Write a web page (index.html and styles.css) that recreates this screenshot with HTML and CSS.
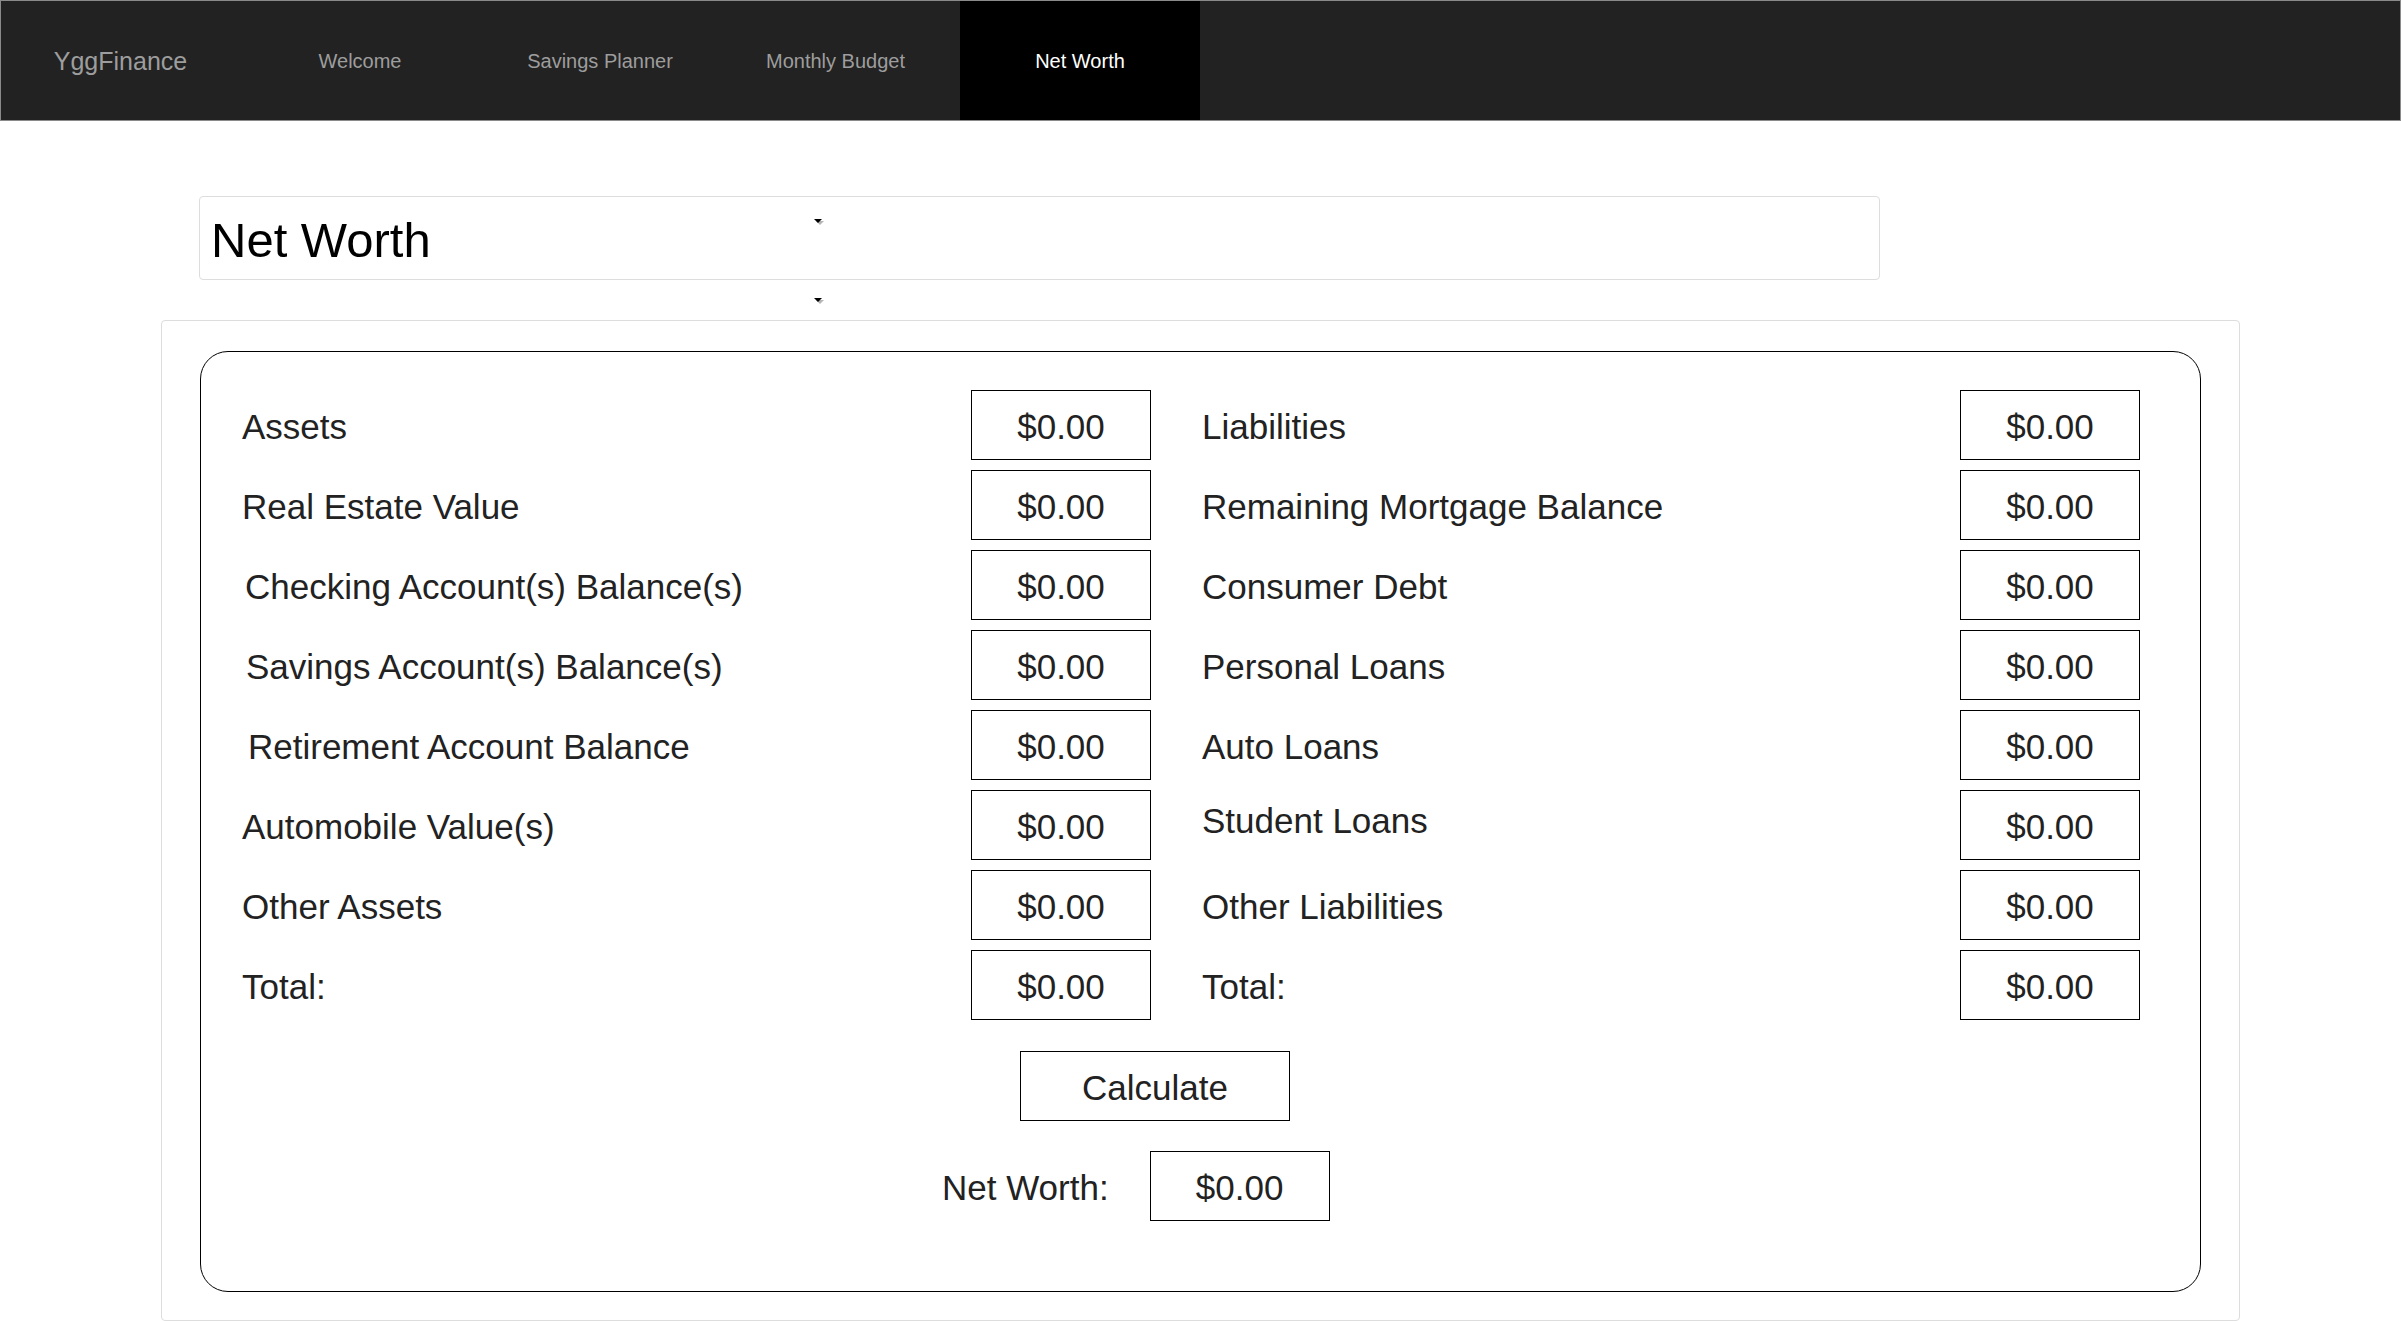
FILE: index.html
```html
<!DOCTYPE html>
<html lang="en">
<head>
<meta charset="utf-8">
<title>YggFinance - Net Worth</title>
<link rel="stylesheet" href="styles.css">
</head>
<body>
<nav class="navbar">
  <a class="brand">YggFinance</a>
  <a class="nav-link">Welcome</a>
  <a class="nav-link">Savings Planner</a>
  <a class="nav-link nav-budget">Monthly Budget</a>
  <a class="nav-link active">Net Worth</a>
</nav>
<main class="page">
  <div class="title-box">
    <h1 class="title">Net Worth</h1>
    <span class="caret caret-top"></span>
  </div>
  <div class="caret-row"><span class="caret"></span></div>
  <section class="panel">
    <div class="card">
      <div class="columns">
        <div class="col col-assets">
          <div class="row"><span class="label">Assets</span><div class="money">$0.00</div></div>
          <div class="row"><span class="label">Real Estate Value</span><div class="money">$0.00</div></div>
          <div class="row"><span class="label indent-a">Checking Account(s) Balance(s)</span><div class="money">$0.00</div></div>
          <div class="row"><span class="label indent-b">Savings Account(s) Balance(s)</span><div class="money">$0.00</div></div>
          <div class="row"><span class="label indent-c">Retirement Account Balance</span><div class="money">$0.00</div></div>
          <div class="row"><span class="label">Automobile Value(s)</span><div class="money">$0.00</div></div>
          <div class="row"><span class="label">Other Assets</span><div class="money">$0.00</div></div>
          <div class="row"><span class="label">Total:</span><div class="money">$0.00</div></div>
        </div>
        <div class="col col-liab">
          <div class="row"><span class="label">Liabilities</span><div class="money">$0.00</div></div>
          <div class="row"><span class="label">Remaining Mortgage Balance</span><div class="money">$0.00</div></div>
          <div class="row"><span class="label">Consumer Debt</span><div class="money">$0.00</div></div>
          <div class="row"><span class="label">Personal Loans</span><div class="money">$0.00</div></div>
          <div class="row"><span class="label">Auto Loans</span><div class="money">$0.00</div></div>
          <div class="row"><span class="label raised">Student Loans</span><div class="money">$0.00</div></div>
          <div class="row"><span class="label">Other Liabilities</span><div class="money">$0.00</div></div>
          <div class="row"><span class="label">Total:</span><div class="money">$0.00</div></div>
        </div>
      </div>
      <div class="calc-row"><button class="calc-btn" type="button">Calculate</button></div>
      <div class="net-row"><span class="net-label">Net Worth:</span><div class="money">$0.00</div></div>
    </div>
  </section>
</main>
</body>
</html>
```
FILE: styles.css
```css
html, body {
  margin: 0;
  padding: 0;
  background: #fff;
}

body {
  font-family: "Liberation Sans", Arial, sans-serif;
  color: #222;
}

.navbar {
  display: flex;
  height: 119px;
  background: #222;
  border: 1px solid #8a8a8a;
}

.brand,
.nav-link {
  display: flex;
  align-items: center;
  justify-content: center;
  box-sizing: border-box;
  width: 240px;
  padding-top: 2px;
  color: #9d9d9d;
  text-decoration: none;
}

.brand {
  width: 239px;
  font-size: 25px;
}

.nav-link {
  font-size: 20px;
}

.nav-budget {
  padding-right: 9px;
}

.nav-link.active {
  background: #000;
  color: #fff;
}

.page {
  padding: 75px 0 0 161px;
}

.title-box {
  position: relative;
  box-sizing: border-box;
  width: 1681px;
  height: 84px;
  margin-left: 38px;
  padding: 3px 0 0 11px;
  border: 1px solid #ddd;
  border-radius: 4px;
  display: flex;
  align-items: center;
}

.title {
  margin: 0;
  font-size: 49px;
  font-weight: normal;
  color: #000;
}

.caret {
  display: inline-block;
  width: 0;
  height: 0;
  border-left: 4px solid transparent;
  border-right: 4px solid transparent;
  border-top: 4px solid #000;
  filter: drop-shadow(2px 2px 0 #b5b5b5);
}

.caret-top {
  position: absolute;
  left: 614px;
  top: 22px;
}

.caret-row {
  box-sizing: border-box;
  height: 40px;
  padding: 18px 0 0 653px;
  display: flex;
  align-items: flex-start;
}

.panel {
  box-sizing: border-box;
  width: 2079px;
  height: 1001px;
  border: 1px solid #ddd;
  border-radius: 4px;
  padding: 30px 0 0 38px;
}

.card {
  box-sizing: border-box;
  width: 2001px;
  height: 941px;
  border: 1px solid #000;
  border-radius: 28px;
  padding: 38px 0 0 41px;
}

.columns {
  display: flex;
  gap: 51px;
}

.col {
  display: flex;
  flex-direction: column;
  gap: 10px;
}

.col-assets {
  width: 909px;
}

.col-liab {
  width: 938px;
}

.row {
  display: flex;
  align-items: center;
  height: 70px;
}

.label {
  flex: 1;
  padding-top: 3px;
  font-size: 35px;
}

.indent-a {
  padding-left: 3px;
}

.indent-b {
  padding-left: 4px;
}

.indent-c {
  padding-left: 6px;
}

.raised {
  padding-top: 0;
  padding-bottom: 8px;
}

.money {
  box-sizing: border-box;
  width: 180px;
  height: 70px;
  padding-top: 3px;
  border: 1px solid #000;
  display: flex;
  align-items: center;
  justify-content: center;
  font-size: 35px;
}

.calc-row {
  margin-top: 31px;
  padding-left: 778px;
}

.calc-btn {
  box-sizing: border-box;
  width: 270px;
  height: 70px;
  background: #fff;
  border: 1px solid #000;
  border-radius: 0;
  font-family: "Liberation Sans", Arial, sans-serif;
  font-size: 35px;
  color: #222;
  padding: 3px 0 0;
}

.net-row {
  margin-top: 30px;
  padding-left: 700px;
  display: flex;
  align-items: center;
  height: 70px;
}

.net-label {
  font-size: 35px;
  padding-top: 3px;
  margin-right: 41px;
}
```
